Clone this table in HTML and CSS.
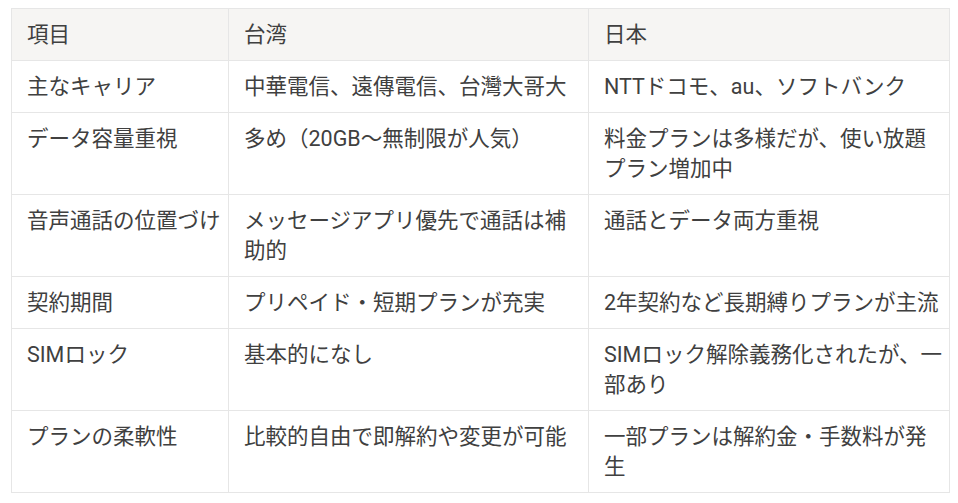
FILE: index.html
```html
<!DOCTYPE html>
<html lang="ja">
<head>
<meta charset="utf-8">
<title>台湾と日本の比較</title>
<link rel="stylesheet" href="styles.css">
</head>
<body>
<table class="cmp">
  <colgroup>
    <col class="c1"><col class="c2"><col class="c3">
  </colgroup>
  <thead>
    <tr><th>項目</th><th>台湾</th><th>日本</th></tr>
  </thead>
  <tbody>
    <tr><td>主なキャリア</td><td>中華電信、遠傳電信、台灣大哥大</td><td>NTTドコモ、au、ソフトバンク</td></tr>
    <tr><td>データ容量重視</td><td>多め（20GB～無制限が人気）</td><td>料金プランは多様だが、使い放題プラン増加中</td></tr>
    <tr><td>音声通話の位置づけ</td><td>メッセージアプリ優先で通話は補助的</td><td>通話とデータ両方重視</td></tr>
    <tr><td>契約期間</td><td>プリペイド・短期プランが充実</td><td>2年契約など長期縛りプランが主流</td></tr>
    <tr><td>SIMロック</td><td>基本的になし</td><td>SIMロック解除義務化されたが、一部あり</td></tr>
    <tr><td>プランの柔軟性</td><td>比較的自由で即解約や変更が可能</td><td>一部プランは解約金・手数料が発生</td></tr>
  </tbody>
</table>
</body>
</html>
```
FILE: styles.css
```css
html, body {
  margin: 0;
  background: #ffffff;
}
body {
  padding: 8px 0 0 11px;
  font-family: "Roboto", "Noto Sans CJK JP", sans-serif;
  color: #404040;
}
.cmp {
  border-collapse: collapse;
  table-layout: fixed;
  width: 938px;
  font-size: 21.5px;
  line-height: 30px;
}
.c1 { width: 217px; }
.c2 { width: 360px; }
.c3 { width: 361px; }
.cmp th,
.cmp td {
  border: 1px solid #e6e6e6;
  padding: 11px 5px 10px 15px;
  text-align: left;
  vertical-align: top;
  font-weight: 400;
  word-break: break-all;
}
.cmp thead th {
  background: #f6f5f3;
}
```
